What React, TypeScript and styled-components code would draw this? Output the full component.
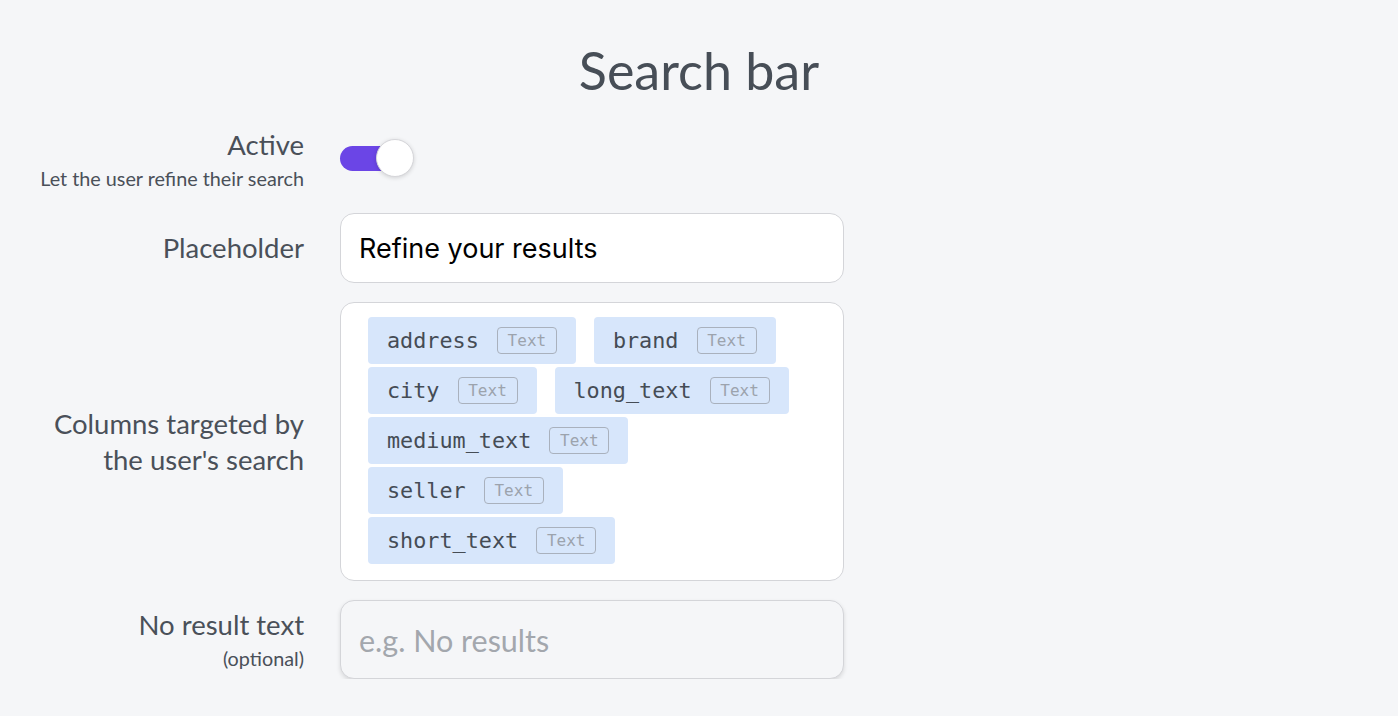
import React from "react";
import styled, { createGlobalStyle } from "styled-components";

const GlobalStyle = createGlobalStyle`
  html, body {
    margin: 0;
    padding: 0;
    background: #f5f6f8;
  }
  body {
    font-family: Lato, "Noto Sans", sans-serif;
    color: #4a5059;
  }
`;

const columns = [
  "address",
  "brand",
  "city",
  "long_text",
  "medium_text",
  "seller",
  "short_text",
];

const App = () => {
  return (
    <>
      <GlobalStyle />
      <Page>
        <Title>Search bar</Title>
        <Form>
          <LabelCell $top>
            <Label>Active</Label>
            <Hint>Let the user refine their search</Hint>
          </LabelCell>
          <ControlCell>
            <Toggle>
              <Track />
              <Knob />
            </Toggle>
          </ControlCell>

          <LabelCell>
            <Label>Placeholder</Label>
          </LabelCell>
          <ControlCell>
            <TextInput defaultValue="Refine your results" />
          </ControlCell>

          <LabelCell>
            <Label>
              Columns targeted by
              <br />
              the user's search
            </Label>
          </LabelCell>
          <ControlCell>
            <ChipBox>
              {columns.map((c) => (
                <Chip key={c}>
                  <ChipName>{c}</ChipName>
                  <TypeBadge>Text</TypeBadge>
                </Chip>
              ))}
            </ChipBox>
          </ControlCell>

          <LabelCell $top>
            <Label>No result text</Label>
            <Hint>(optional)</Hint>
          </LabelCell>
          <ControlCell>
            <TextInput $muted placeholder="e.g. No results" />
          </ControlCell>
        </Form>
      </Page>
    </>
  );
};

export default App;

const Page = styled.div`
  padding-top: 40px;
`;

const Title = styled.h1`
  margin: 0 0 20px;
  text-align: center;
  font-size: 52px;
  font-weight: 400;
  line-height: 60px;
  color: #474e57;
`;

const Form = styled.div`
  display: grid;
  grid-template-columns: 280px 504px;
  column-gap: 36px;
  row-gap: 19px;
  padding-left: 24px;
`;

const LabelCell = styled.div<{ $top?: boolean }>`
  display: flex;
  flex-direction: column;
  align-items: flex-end;
  justify-content: ${(p) => (p.$top ? "flex-start" : "center")};
  padding: ${(p) => (p.$top ? "7px 0 4px" : "0")};
  text-align: right;
`;

const Label = styled.div`
  font-size: 27.5px;
  line-height: 36px;
  color: #4a5059;
`;

const Hint = styled.div`
  font-size: 19.8px;
  line-height: 24px;
  margin-top: 3px;
  color: #4a5059;
`;

const ControlCell = styled.div`
  display: flex;
  align-items: flex-start;
`;

const Toggle = styled.div`
  position: relative;
  width: 74px;
  height: 40px;
  margin-top: 19px;
`;

const Track = styled.div`
  position: absolute;
  left: 0;
  top: 7px;
  width: 54px;
  height: 25px;
  border-radius: 13px;
  background: #6b45e6;
`;

const Knob = styled.div`
  position: absolute;
  left: 36px;
  top: 0;
  width: 36px;
  height: 36px;
  border-radius: 50%;
  background: #fff;
  border: 1px solid #d6d6da;
  box-shadow: 0 1px 4px rgba(0, 0, 0, 0.15);
`;

const TextInput = styled.input<{ $muted?: boolean }>`
  box-sizing: border-box;
  width: 504px;
  height: ${(p) => (p.$muted ? "79px" : "70px")};
  padding: 0 18px;
  border: 1px solid #d4d5d9;
  border-radius: 14px;
  background: ${(p) => (p.$muted ? "#f5f6f8" : "#ffffff")};
  box-shadow: ${(p) => (p.$muted ? "0 2px 4px rgba(0,0,0,0.12)" : "none")};
  font-family: ${(p) =>
    p.$muted ? 'Lato, "Noto Sans", sans-serif' : 'Inter, "Liberation Sans", sans-serif'};
  font-size: ${(p) => (p.$muted ? "30.5px" : "27px")};
  color: #000;
  outline: none;
  &::placeholder {
    color: #a3a7ad;
  }
`;

const ChipBox = styled.div`
  box-sizing: border-box;
  width: 504px;
  display: flex;
  flex-wrap: wrap;
  align-content: flex-start;
  column-gap: 18px;
  row-gap: 3px;
  padding: 14px 27px 16px 27px;
  background: #fff;
  border: 1px solid #d4d5d9;
  border-radius: 14px;
`;

const Chip = styled.div`
  display: flex;
  align-items: center;
  gap: 18px;
  height: 47px;
  padding: 0 19px;
  border-radius: 4px;
  background: #d7e6fb;
`;

const ChipName = styled.span`
  font-family: "DejaVu Sans Mono", "Liberation Mono", monospace;
  font-size: 21.8px;
  color: #454c55;
`;

const TypeBadge = styled.span`
  box-sizing: border-box;
  display: flex;
  align-items: center;
  justify-content: center;
  width: 60px;
  height: 27px;
  border: 1px solid #a9b1bd;
  border-radius: 4px;
  font-family: "DejaVu Sans Mono", "Liberation Mono", monospace;
  font-size: 16px;
  color: #9ca3ad;
`;
